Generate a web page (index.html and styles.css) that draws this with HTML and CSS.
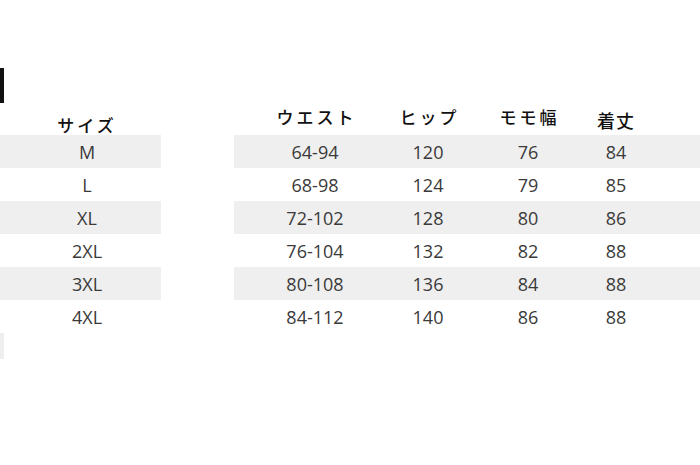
FILE: index.html
```html
<!DOCTYPE html>
<html lang="ja">
<head>
<meta charset="utf-8">
<link rel="stylesheet" href="styles.css">
</head>
<body>
<div class="page">
  <div class="marker"></div>
  <div class="row head">
    <div class="size-cell"><span class="size-head">サイズ</span></div>
    <div class="gap"></div>
    <div class="cols">
      <div class="c c1 wide">ウエスト</div>
      <div class="c c2 wide">ヒップ</div>
      <div class="c c3 wide">モモ幅</div>
      <div class="c c4 tall">着丈</div>
    </div>
  </div>
  <div class="row shade"><div class="size-cell">M</div><div class="gap"></div><div class="cols"><div class="c c1">64-94</div><div class="c c2">120</div><div class="c c3">76</div><div class="c c4">84</div></div></div>
  <div class="row"><div class="size-cell">L</div><div class="gap"></div><div class="cols"><div class="c c1">68-98</div><div class="c c2">124</div><div class="c c3">79</div><div class="c c4">85</div></div></div>
  <div class="row shade"><div class="size-cell">XL</div><div class="gap"></div><div class="cols"><div class="c c1">72-102</div><div class="c c2">128</div><div class="c c3">80</div><div class="c c4">86</div></div></div>
  <div class="row"><div class="size-cell">2XL</div><div class="gap"></div><div class="cols"><div class="c c1">76-104</div><div class="c c2">132</div><div class="c c3">82</div><div class="c c4">88</div></div></div>
  <div class="row shade"><div class="size-cell">3XL</div><div class="gap"></div><div class="cols"><div class="c c1">80-108</div><div class="c c2">136</div><div class="c c3">84</div><div class="c c4">88</div></div></div>
  <div class="row"><div class="size-cell">4XL</div><div class="gap"></div><div class="cols"><div class="c c1">84-112</div><div class="c c2">140</div><div class="c c3">86</div><div class="c c4">88</div></div></div>
  <div class="stub"></div>
</div>
</body>
</html>
```
FILE: styles.css
```css
html, body {
  margin: 0;
  padding: 0;
  background: #ffffff;
}
.page {
  width: 700px;
  height: 465px;
  padding-top: 68px;
  box-sizing: border-box;
  font-family: "Open Sans", "Noto Sans CJK JP", sans-serif;
  font-weight: 400;
  color: #3a3a3a;
  font-size: 18px;
}
.marker {
  width: 4px;
  height: 35px;
  background: #111111;
}
.row {
  display: flex;
  height: 33px;
  align-items: stretch;
}
.size-cell {
  width: 161px;
  display: flex;
  align-items: center;
  justify-content: center;
  padding-left: 13px;
  box-sizing: border-box;
  line-height: 1;
  padding-top: 1px;
}
.gap {
  width: 73px;
}
.cols {
  flex: 1;
  display: grid;
  grid-template-columns: 162px 64px 136px 40px 1fr;
}
.c {
  display: flex;
  align-items: center;
  justify-content: center;
  line-height: 1;
  white-space: nowrap;
  padding-top: 1px;
}
.c1 { grid-column: 1; }
.c2 { grid-column: 2; }
.c3 { grid-column: 3; }
.c4 { grid-column: 4; }
.shade .size-cell,
.shade .cols {
  background: #efefef;
}
.head {
  font-family: "Noto Sans CJK JP", sans-serif;
  font-weight: 500;
  color: #111111;
  font-size: 17px;
  height: 32px;
}
.head .c {
  align-items: flex-start;
  padding-top: 5px;
}
.head .wide {
  letter-spacing: 3px;
  padding-left: 3px;
}
.head .tall {
  padding-top: 8px;
  font-size: 18px;
  letter-spacing: 1px;
}
.size-head {
  letter-spacing: 3px;
  padding-top: 12px;
  align-self: flex-start;
}
.stub {
  width: 4px;
  height: 26px;
  background: #eeeeee;
}
```
